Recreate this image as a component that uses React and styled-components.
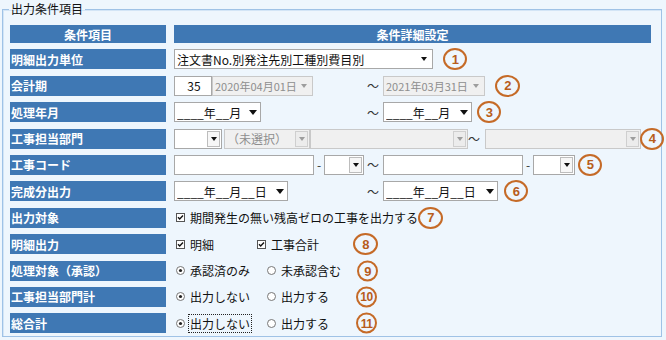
import React from "react";
import styled, { createGlobalStyle } from "styled-components";

const GlobalStyle = createGlobalStyle`
  html, body { margin: 0; padding: 0; background: #eef6fd; }
  body {
    font-family: "Noto Sans CJK JP", "Noto Sans", sans-serif;
    font-size: 12px;
    color: #111;
  }
`;

const Fieldset = styled.fieldset`
  box-sizing: border-box;
  width: 660px;
  min-width: 0;
  margin: 0 0 0 2px;
  padding: 7px 9px 3px 7px;
  border: 1px solid #9fc2e6;
  box-shadow: inset 1px 1px 0 #d3e5f6;
`;

const Legend = styled.legend`
  padding: 0 2px;
  margin-left: -1px;
  font-size: 12px;
  line-height: 18px;
  color: #111;
`;

const Grid = styled.div`
  display: grid;
  grid-template-columns: 156px 477px;
  grid-template-rows: 18px;
  grid-auto-rows: 20px;
  column-gap: 8px;
  row-gap: 6.4px;
`;

const Head = styled.div`
  background: #3f78b4;
  color: #fff;
  font-weight: bold;
  font-size: 12px;
  display: flex;
  align-items: center;
  justify-content: center;
`;

const Label = styled.div`
  background: #3f78b4;
  color: #fff;
  font-weight: bold;
  font-size: 12px;
  display: flex;
  align-items: center;
  padding-left: 1px;
  white-space: nowrap;
`;

const Detail = styled.div`
  position: relative;
  display: flex;
  align-items: center;
  padding-left: ${(p) => p.$pad || 0}px;
  white-space: nowrap;
`;

const Box = styled.div`
  box-sizing: border-box;
  flex-shrink: 0;
  width: ${(p) => p.$w}px;
  height: 20px;
  display: flex;
  align-items: center;
  background: ${(p) => (p.$disabled ? "#f0f0f0" : "#fff")};
  border: 1px solid ${(p) => (p.$disabled ? "#c9c9c9" : "#a8a8a8")};
  color: ${(p) => (p.$disabled ? "#8e8e8e" : "#111")};
  padding-left: 2px;
  justify-content: ${(p) => (p.$center ? "center" : "flex-start")};
  margin-left: ${(p) => p.$ml || 0}px;
`;

const BoxText = styled.span`
  flex: 1;
  overflow: hidden;
  white-space: nowrap;
  font-size: ${(p) => p.$fs || 12}px;
`;

const ArrowZone = styled.span`
  box-sizing: border-box;
  flex-shrink: 0;
  display: flex;
  align-items: center;
  justify-content: center;
  width: ${(p) => (p.$boxed ? 13 : p.$big ? 14 : 16)}px;
  height: ${(p) => (p.$boxed ? 16 : 18)}px;
  margin-right: ${(p) => (p.$boxed ? 1 : 0)}px;
  border: ${(p) => (p.$boxed ? `1px solid ${p.$disabled ? "#cfcfcf" : "#bdbdbd"}` : "none")};
  background: ${(p) => (p.$boxed ? (p.$disabled ? "#ececec" : "#f7f7f7") : "transparent")};
`;

const FromGroup = styled.div`
  display: flex;
  align-items: center;
  flex-shrink: 0;
  width: ${(p) => p.$w || 193}px;
`;

const Tilde = styled.span`
  flex-shrink: 0;
  width: ${(p) => p.$w || 16}px;
  color: #333;
`;

const Dash = styled.span`
  flex-shrink: 0;
  width: ${(p) => p.$w || 10}px;
  text-align: center;
  color: #333;
`;

const Option = styled.span`
  display: flex;
  align-items: center;
  flex-shrink: 0;
  gap: 5px;
  width: ${(p) => (p.$w ? `${p.$w}px` : "auto")};
`;

const FocusText = styled.span`
  outline: 1px dotted #222;
  outline-offset: 0;
  padding: 0 1px;
  margin-left: -1px;
`;

const Badge = styled.span`
  position: absolute;
  top: 50%;
  left: ${(p) => p.$x}px;
  width: ${(p) => p.$w || 24}px;
  height: ${(p) => p.$h || 22}px;
  transform: translateY(-50%);
  box-sizing: border-box;
  border: 2px solid #c56a27;
  border-radius: 50%;
  display: flex;
  align-items: center;
  justify-content: center;
  color: #b75c1b;
  font-family: "Liberation Sans", Arial, sans-serif;
  font-weight: bold;
  font-size: ${(p) => p.$fs || 13}px;
  letter-spacing: -0.5px;
  z-index: 2;
`;

const Tri = ({ big, color }) => {
  const w = big ? 8 : 6;
  const h = big ? 5 : 4;
  return (
    <svg width={w} height={h} viewBox={`0 0 ${w} ${h}`}>
      <path d={`M0 0H${w}L${w / 2} ${h}Z`} fill={color} />
    </svg>
  );
};

function Select({ w, text, disabled, boxed, big, ml, fs }) {
  return (
    <Box $w={w} $disabled={disabled} $ml={ml}>
      <BoxText $fs={fs}>{text}</BoxText>
      <ArrowZone $boxed={boxed} $disabled={disabled} $big={big}>
        <Tri big={big} color={disabled ? "#9d9d9d" : "#111"} />
      </ArrowZone>
    </Box>
  );
}

const CheckBox = () => (
  <svg width="9" height="9" viewBox="0 0 9 9">
    <rect x="0.5" y="0.5" width="8" height="8" fill="#fff" stroke="#555" />
    <path d="M2 4.2L3.7 6L7 2.6" fill="none" stroke="#111" strokeWidth="1.4" />
  </svg>
);

const Radio = ({ on }) => (
  <svg width="9" height="9" viewBox="0 0 9 9">
    <circle cx="4.5" cy="4.5" r="4" fill="#fff" stroke="#777" />
    {on && <circle cx="4.5" cy="4.5" r="1.6" fill="#222" />}
  </svg>
);

export default function App() {
  return (
    <>
      <GlobalStyle />
      <Fieldset>
        <Legend>出力条件項目</Legend>
        <Grid>
          <Head>条件項目</Head>
          <Head>条件詳細設定</Head>

          <Label>明細出力単位</Label>
          <Detail>
            <Select w={259} text="注文書No.別発注先別工種別費目別" />
            <Badge $x={269}>1</Badge>
          </Detail>

          <Label>会計期</Label>
          <Detail>
            <FromGroup>
              <Box $w={38} $center>35</Box>
              <Select w={101} text="2020年04月01日" disabled fs={11} />
            </FromGroup>
            <Tilde>～</Tilde>
            <Select w={102} text="2021年03月31日" disabled fs={11} />
            <Badge $x={321} $w={25}>2</Badge>
          </Detail>

          <Label>処理年月</Label>
          <Detail>
            <FromGroup>
              <Select w={87} text="____年__月" big />
            </FromGroup>
            <Tilde>～</Tilde>
            <Select w={89} text="____年__月" big />
            <Badge $x={303}>3</Badge>
          </Detail>

          <Label>工事担当部門</Label>
          <Detail>
            <Select w={48} text="" boxed />
            <Select w={86} text="（未選択）" disabled boxed ml={2} />
            <Select w={158} text="" disabled boxed />
            <Tilde $w={17}>～</Tilde>
            <Select w={156} text="" disabled boxed />
            <Badge $x={466}>4</Badge>
          </Detail>

          <Label>工事コード</Label>
          <Detail>
            <FromGroup>
              <Box $w={140} />
              <Dash>-</Dash>
              <Select w={40} text="" boxed />
            </FromGroup>
            <Tilde>～</Tilde>
            <Box $w={140} />
            <Dash>-</Dash>
            <Select w={42} text="" boxed />
            <Badge $x={404}>5</Badge>
          </Detail>

          <Label>完成分出力</Label>
          <Detail>
            <FromGroup>
              <Select w={114} text="____年__月__日" big />
            </FromGroup>
            <Tilde>～</Tilde>
            <Select w={115} text="____年__月__日" big />
            <Badge $x={330}>6</Badge>
          </Detail>

          <Label>出力対象</Label>
          <Detail $pad={2}>
            <Option>
              <CheckBox />
              期間発生の無い残高ゼロの工事を出力する
            </Option>
            <Badge $x={244} $w={25}>7</Badge>
          </Detail>

          <Label>明細出力</Label>
          <Detail $pad={2}>
            <Option $w={81}>
              <CheckBox />
              明細
            </Option>
            <Option>
              <CheckBox />
              工事合計
            </Option>
            <Badge $x={179} $w={25}>8</Badge>
          </Detail>

          <Label>処理対象（承認）</Label>
          <Detail $pad={2}>
            <Option $w={91}>
              <Radio on />
              承認済のみ
            </Option>
            <Option>
              <Radio />
              未承認含む
            </Option>
            <Badge $x={183} $w={21} $h={21}>9</Badge>
          </Detail>

          <Label>工事担当部門計</Label>
          <Detail $pad={2}>
            <Option $w={91}>
              <Radio on />
              出力しない
            </Option>
            <Option>
              <Radio />
              出力する
            </Option>
            <Badge $x={182} $w={21} $h={21} $fs={12}>10</Badge>
          </Detail>

          <Label>総合計</Label>
          <Detail $pad={2}>
            <Option $w={91}>
              <Radio on />
              <FocusText>出力しない</FocusText>
            </Option>
            <Option>
              <Radio />
              出力する
            </Option>
            <Badge $x={182} $w={21} $h={21} $fs={12}>11</Badge>
          </Detail>
        </Grid>
      </Fieldset>
    </>
  );
}
